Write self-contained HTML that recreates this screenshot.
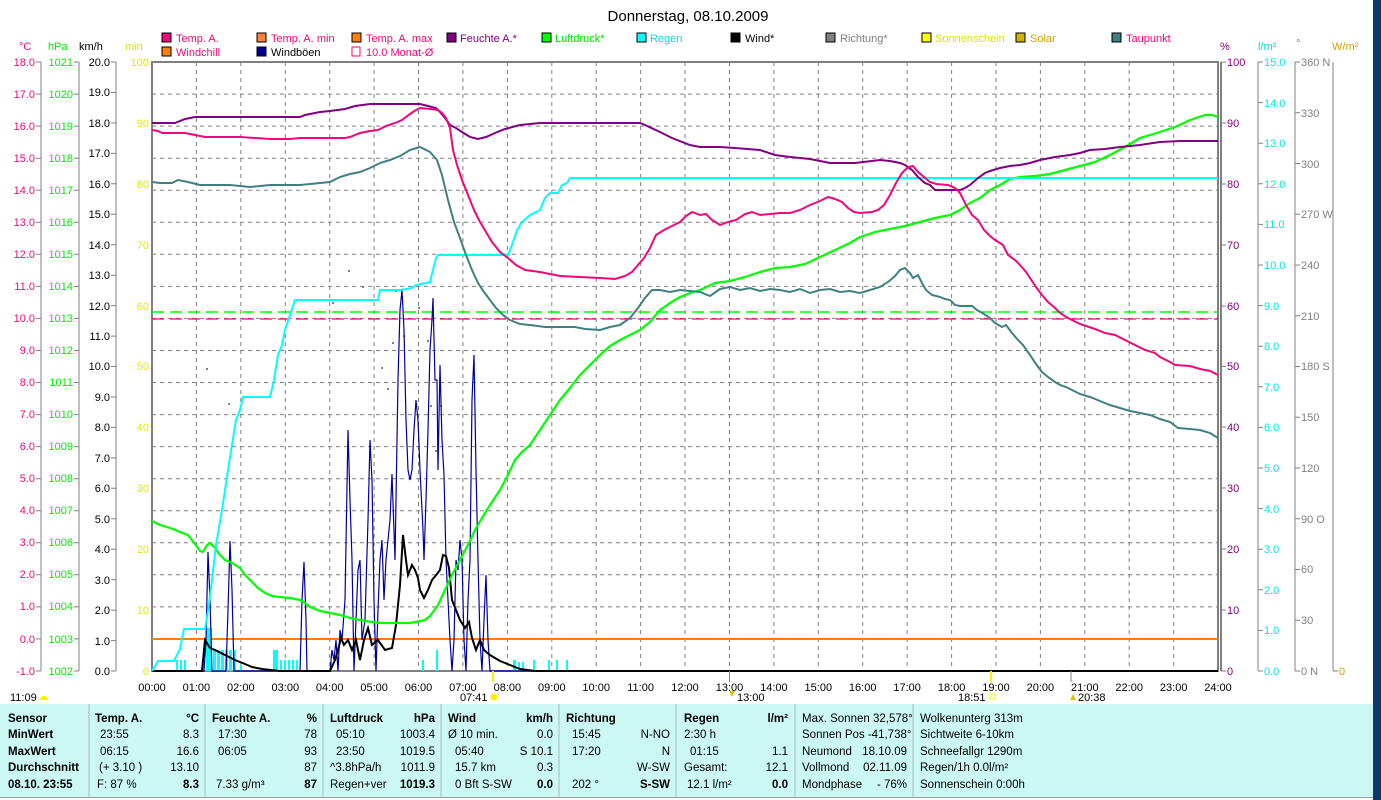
<!DOCTYPE html>
<html><head><meta charset="utf-8"><style>
html,body{margin:0;padding:0;background:#fff;width:1381px;height:800px;overflow:hidden}
svg{display:block;font-family:"Liberation Sans",sans-serif}
</style></head><body>
<svg width="1381" height="800" viewBox="0 0 1381 800" xmlns="http://www.w3.org/2000/svg">
<rect width="1381" height="800" fill="#fff"/>
<rect x="1373" y="0" width="8" height="800" fill="#0a3a6e"/>
<text x="688" y="21" font-size="15" text-anchor="middle" fill="#000">Donnerstag, 08.10.2009</text>

<!-- legend -->
<g font-size="11">
<rect x="162" y="33" width="9" height="9" fill="#f0087a" stroke="#000"/><text x="176" y="42" fill="#f0087a">Temp. A.</text>
<rect x="257" y="33" width="9" height="9" fill="#ff8040" stroke="#000"/><text x="271" y="42" fill="#f0087a">Temp. A. min</text>
<rect x="352" y="33" width="9" height="9" fill="#ff8000" stroke="#000"/><text x="366" y="42" fill="#f0087a">Temp. A. max</text>
<rect x="447" y="33" width="9" height="9" fill="#800080" stroke="#000"/><text x="460" y="42" fill="#800080">Feuchte A.*</text>
<rect x="542" y="33" width="9" height="9" fill="#00ff00" stroke="#000"/><text x="555" y="42" fill="#00dd00">Luftdruck*</text>
<rect x="637" y="33" width="9" height="9" fill="#00ffff" stroke="#000"/><text x="650" y="42" fill="#00e0e0">Regen</text>
<rect x="731" y="33" width="9" height="9" fill="#000" stroke="#000"/><text x="745" y="42" fill="#000">Wind*</text>
<rect x="826" y="33" width="9" height="9" fill="#808080" stroke="#000"/><text x="840" y="42" fill="#808080">Richtung*</text>
<rect x="922" y="33" width="9" height="9" fill="#ffff00" stroke="#000"/><text x="935" y="42" fill="#e0e000">Sonnenschein</text>
<rect x="1016" y="33" width="9" height="9" fill="#d0b000" stroke="#000"/><text x="1030" y="42" fill="#d0a000">Solar</text>
<rect x="1112" y="33" width="9" height="9" fill="#408080" stroke="#000"/><text x="1126" y="42" fill="#f0087a">Taupunkt</text>
<rect x="162" y="47" width="9" height="9" fill="#ff8000" stroke="#000"/><text x="176" y="56" fill="#f0087a">Windchill</text>
<rect x="257" y="47" width="9" height="9" fill="#000090" stroke="#000"/><text x="271" y="56" fill="#000">Windböen</text>
<rect x="352" y="47" width="8" height="9" fill="none" stroke="#f0087a"/><text x="366" y="56" fill="#f0087a">10.0 Monat-Ø</text>
</g>

<!-- axis headers -->
<g font-size="11">
<text x="19" y="50" fill="#f0087a">°C</text>
<text x="48" y="50" fill="#00ee00">hPa</text>
<text x="79" y="50" fill="#000">km/h</text>
<text x="125" y="50" fill="#e0e000">min</text>
<text x="1220" y="50" fill="#800080">%</text>
<text x="1258" y="50" fill="#00e0e0">l/m²</text>
<text x="1296" y="47" fill="#808080">°</text>
<text x="1332" y="50" fill="#d0a000">W/m²</text>
</g>

<!-- grid -->
<g stroke="#808080" stroke-width="1" stroke-dasharray="4,4" fill="none">
<path d="M196.4 62V671M240.8 62V671M285.3 62V671M329.7 62V671M374.1 62V671M418.5 62V671M462.9 62V671M507.4 62V671M551.8 62V671M596.2 62V671M640.6 62V671M685 62V671M729.5 62V671M773.9 62V671M818.3 62V671M862.7 62V671M907.1 62V671M951.6 62V671M996 62V671M1040.4 62V671M1084.8 62V671M1129.2 62V671M1173.7 62V671"/>
<path d="M152 94.1H1218M152 126.1H1218M152 158.2H1218M152 190.2H1218M152 222.3H1218M152 254.3H1218M152 286.4H1218M152 318.4H1218M152 350.5H1218M152 382.5H1218M152 414.6H1218M152 446.6H1218M152 478.7H1218M152 510.7H1218M152 542.8H1218M152 574.8H1218M152 606.9H1218M152 638.9H1218"/>
</g>
<rect x="152" y="62" width="1066" height="609" fill="none" stroke="#808080" stroke-width="2"/>
<line x1="1221" y1="62" x2="1221" y2="671" stroke="#808080" stroke-width="2"/>

<!-- left axes -->
<g stroke="#808080" stroke-width="1">
<line x1="41" y1="62" x2="41" y2="671"/><line x1="79" y1="62" x2="79" y2="671"/><line x1="116" y1="62" x2="116" y2="671"/>
<line x1="1258" y1="62" x2="1258" y2="671"/><line x1="1295" y1="62" x2="1295" y2="671"/><line x1="1333" y1="62" x2="1333" y2="671"/>
<path d="M36 62H41M36 94.1H41M36 126.1H41M36 158.2H41M36 190.2H41M36 222.3H41M36 254.3H41M36 286.4H41M36 318.4H41M36 350.5H41M36 382.5H41M36 414.6H41M36 446.6H41M36 478.7H41M36 510.7H41M36 542.8H41M36 574.8H41M36 606.9H41M36 638.9H41M36 671H41"/>
<path d="M74 62H79M74 94.1H79M74 126.1H79M74 158.2H79M74 190.2H79M74 222.3H79M74 254.3H79M74 286.4H79M74 318.4H79M74 350.5H79M74 382.5H79M74 414.6H79M74 446.6H79M74 478.7H79M74 510.7H79M74 542.8H79M74 574.8H79M74 606.9H79M74 638.9H79M74 671H79"/>
<path d="M111 62H116M111 92.5H116M111 122.9H116M111 153.4H116M111 183.8H116M111 214.3H116M111 244.7H116M111 275.2H116M111 305.6H116M111 336.1H116M111 366.5H116M111 397H116M111 427.4H116M111 457.9H116M111 488.3H116M111 518.8H116M111 549.2H116M111 579.7H116M111 610.1H116M111 640.6H116M111 671H116"/>
<path d="M1221 62H1226M1221 123H1226M1221 184H1226M1221 245H1226M1221 306H1226M1221 366.5H1226M1221 427H1226M1221 488H1226M1221 549H1226M1221 610H1226M1221 671H1226"/>
<path d="M1258 62H1263M1258 102.6H1263M1258 143.2H1263M1258 183.8H1263M1258 224.4H1263M1258 265H1263M1258 305.6H1263M1258 346.2H1263M1258 386.8H1263M1258 427.4H1263M1258 468H1263M1258 508.6H1263M1258 549.2H1263M1258 589.8H1263M1258 630.4H1263M1258 671H1263"/>
<path d="M1295 62H1300M1295 112.8H1300M1295 163.5H1300M1295 214.3H1300M1295 265H1300M1295 315.8H1300M1295 366.5H1300M1295 417.3H1300M1295 468H1300M1295 518.8H1300M1295 569.5H1300M1295 620.3H1300M1295 671H1300"/>
<path d="M1333 671H1338"/>
</g>
<g font-size="11" text-anchor="end">
<g fill="#f0087a">
<text x="35" y="66">18.0</text><text x="35" y="98">17.0</text><text x="35" y="130">16.0</text><text x="35" y="162">15.0</text><text x="35" y="194">14.0</text><text x="35" y="226">13.0</text><text x="35" y="258">12.0</text><text x="35" y="290">11.0</text><text x="35" y="322">10.0</text><text x="35" y="354">9.0</text><text x="35" y="386">8.0</text><text x="35" y="418">7.0</text><text x="35" y="450">6.0</text><text x="35" y="482">5.0</text><text x="35" y="514">4.0</text><text x="35" y="546">3.0</text><text x="35" y="578">2.0</text><text x="35" y="610">1.0</text><text x="35" y="643">0.0</text><text x="35" y="675">-1.0</text>
</g>
<g fill="#00ee00">
<text x="73" y="66">1021</text><text x="73" y="98">1020</text><text x="73" y="130">1019</text><text x="73" y="162">1018</text><text x="73" y="194">1017</text><text x="73" y="226">1016</text><text x="73" y="258">1015</text><text x="73" y="290">1014</text><text x="73" y="322">1013</text><text x="73" y="354">1012</text><text x="73" y="386">1011</text><text x="73" y="418">1010</text><text x="73" y="450">1009</text><text x="73" y="482">1008</text><text x="73" y="514">1007</text><text x="73" y="546">1006</text><text x="73" y="578">1005</text><text x="73" y="610">1004</text><text x="73" y="643">1003</text><text x="73" y="675">1002</text>
</g>
<g fill="#000">
<text x="110" y="66">20.0</text><text x="110" y="96">19.0</text><text x="110" y="127">18.0</text><text x="110" y="157">17.0</text><text x="110" y="188">16.0</text><text x="110" y="218">15.0</text><text x="110" y="249">14.0</text><text x="110" y="279">13.0</text><text x="110" y="310">12.0</text><text x="110" y="340">11.0</text><text x="110" y="370">10.0</text><text x="110" y="401">9.0</text><text x="110" y="431">8.0</text><text x="110" y="462">7.0</text><text x="110" y="492">6.0</text><text x="110" y="523">5.0</text><text x="110" y="553">4.0</text><text x="110" y="584">3.0</text><text x="110" y="614">2.0</text><text x="110" y="645">1.0</text><text x="110" y="675">0.0</text>
</g>
<g fill="#e8e800">
<text x="149" y="66">100</text><text x="149" y="127">90</text><text x="149" y="188">80</text><text x="149" y="249">70</text><text x="149" y="310">60</text><text x="149" y="370">50</text><text x="149" y="431">40</text><text x="149" y="492">30</text><text x="149" y="553">20</text><text x="149" y="614">10</text><text x="149" y="675">0</text>
</g>
</g>
<g font-size="11">
<g fill="#800080">
<text x="1227" y="66">100</text><text x="1227" y="127">90</text><text x="1227" y="188">80</text><text x="1227" y="249">70</text><text x="1227" y="310">60</text><text x="1227" y="370">50</text><text x="1227" y="431">40</text><text x="1227" y="492">30</text><text x="1227" y="553">20</text><text x="1227" y="614">10</text><text x="1227" y="675">0</text>
</g>
<g fill="#00e8e8">
<text x="1264" y="66">15.0</text><text x="1264" y="107">14.0</text><text x="1264" y="147">13.0</text><text x="1264" y="188">12.0</text><text x="1264" y="228">11.0</text><text x="1264" y="269">10.0</text><text x="1264" y="310">9.0</text><text x="1264" y="350">8.0</text><text x="1264" y="391">7.0</text><text x="1264" y="431">6.0</text><text x="1264" y="472">5.0</text><text x="1264" y="513">4.0</text><text x="1264" y="553">3.0</text><text x="1264" y="594">2.0</text><text x="1264" y="634">1.0</text><text x="1264" y="675">0.0</text>
</g>
<g fill="#808080">
<text x="1301" y="66">360 N</text><text x="1301" y="117">330</text><text x="1301" y="168">300</text><text x="1301" y="218">270 W</text><text x="1301" y="269">240</text><text x="1301" y="320">210</text><text x="1301" y="370">180 S</text><text x="1301" y="421">150</text><text x="1301" y="472">120</text><text x="1301" y="523">90  O</text><text x="1301" y="573">60</text><text x="1301" y="624">30</text><text x="1301" y="675">0  N</text>
</g>
<text x="1339" y="675" fill="#d0a000">0</text>
</g>

<!-- dashed month avg lines -->
<line x1="152" y1="312" x2="1218" y2="312" stroke="#00ff00" stroke-width="1.5" stroke-dasharray="12,6"/>
<line x1="152" y1="319" x2="1218" y2="319" stroke="#e0106a" stroke-width="1.2" stroke-dasharray="12,6"/>
<line x1="152" y1="639" x2="1218" y2="639" stroke="#ff8000" stroke-width="2"/>

<!-- rain bars -->
<g fill="#00ffff">
<rect x="176" y="660" width="2" height="11"/><rect x="180" y="660" width="2" height="11"/><rect x="184" y="660" width="2" height="11"/>
<rect x="206" y="628" width="6" height="43"/><rect x="213" y="650" width="3" height="21"/><rect x="217" y="650" width="3" height="21"/><rect x="221" y="650" width="3" height="21"/><rect x="225" y="650" width="3" height="21"/><rect x="229" y="650" width="3" height="21"/><rect x="233" y="650" width="3" height="21"/>
<rect x="240" y="665" width="2" height="6"/>
<rect x="273" y="650" width="5" height="21"/><rect x="280" y="660" width="2" height="11"/><rect x="284" y="660" width="2" height="11"/><rect x="288" y="660" width="2" height="11"/><rect x="292" y="660" width="2" height="11"/><rect x="296" y="660" width="2" height="11"/>
<rect x="330" y="662" width="2" height="9"/><rect x="422" y="660" width="2" height="11"/><rect x="436" y="650" width="2" height="21"/>
<rect x="513" y="660" width="3" height="11"/><rect x="518" y="662" width="2" height="9"/><rect x="522" y="662" width="2" height="9"/><rect x="533" y="660" width="2" height="11"/><rect x="548" y="660" width="2" height="11"/><rect x="556" y="660" width="2" height="11"/><rect x="566" y="660" width="2" height="11"/>
</g>

<!-- gray direction dots -->
<g fill="#808080">
<rect x="206" y="368" width="2" height="2"/><rect x="228" y="403" width="2" height="2"/><rect x="332" y="302" width="2" height="2"/><rect x="348" y="270" width="2" height="2"/><rect x="362" y="286" width="2" height="2"/><rect x="381" y="367" width="2" height="2"/><rect x="392" y="342" width="2" height="2"/><rect x="395" y="290" width="2" height="2"/><rect x="403" y="335" width="2" height="2"/><rect x="418" y="307" width="2" height="2"/><rect x="427" y="340" width="2" height="2"/><rect x="430" y="405" width="2" height="2"/><rect x="440" y="405" width="2" height="2"/><rect x="435" y="450" width="2" height="2"/><rect x="448" y="318" width="2" height="2"/><rect x="387" y="388" width="2" height="2"/>
</g>

<!-- wind gusts -->
<polyline fill="none" stroke="#0000a0" stroke-width="1.2" points="152,671 204,671 206,640 208,552 210,600 212,671 226,671 228,610 230,541 232,590 234,671 300,671 302,600 304,562 306,620 307,671 330,671 332,650 334,660 336,640 338,671 340,630 342,640 345,600 348,430 350,500 352,560 354,671 356,620 358,570 360,560 362,640 365,620 368,520 370,440 372,480 374,600 376,671 378,610 380,560 382,540 384,600 386,560 390,520 392,474 395,560 398,380 400,310 402,290 404,330 406,420 408,470 410,480 412,470 414,430 416,400 418,420 420,470 423,530 424,560 426,500 428,430 430,350 432,320 433,298 435,380 437,380 438,470 440,365 442,440 444,475 446,560 448,600 450,640 452,671 454,640 456,560 458,570 460,540 462,560 464,640 466,671 468,600 470,560 472,400 474,355 476,470 478,560 480,640 482,671 484,620 486,575 488,640 490,671 1218,671"/>
<!-- wind average -->
<polyline fill="none" stroke="#000" stroke-width="2" points="152,671 202,671 205,640 210,648 215,650 225,655 235,660 245,664 252,667 262,669 280,671 330,671 335,660 338,650 341,638 344,645 348,640 352,650 356,640 360,660 364,640 368,628 372,645 378,640 385,650 392,648 396,625 400,585 403,535 406,560 408,575 412,565 415,570 418,578 420,590 424,598 428,590 432,580 437,574 440,570 443,555 446,556 449,568 452,600 456,610 460,620 465,628 469,622 472,638 476,650 480,640 484,650 490,655 500,661 510,665 520,669 535,671 1218,671"/>

<!-- pressure -->
<polyline fill="none" stroke="#00ff00" stroke-width="2.2" stroke-linejoin="round" points="152,521 160,525 170,528 180,532 188,535 195,544 200,551 203,552 207,545 210,543 215,548 220,555 225,560 232,563 240,568 245,575 250,580 258,588 265,593 272,596 280,597 290,598 300,600 305,603 310,607 320,611 330,613 340,615 350,618 365,621 380,623 410,623 425,620 430,616 438,605 445,590 452,575 460,560 468,545 475,530 482,518 490,505 500,490 508,475 515,460 522,452 530,445 540,430 550,415 560,400 570,388 580,375 590,365 600,355 610,346 620,340 630,335 640,330 650,322 660,310 670,303 680,297 690,293 700,290 715,283 730,281 745,277 760,272 775,268 790,267 805,264 820,257 835,250 850,243 860,237 875,232 890,229 905,226 920,222 935,218 950,215 960,210 970,203 980,198 990,190 1000,185 1010,179 1020,177 1035,176 1050,174 1065,170 1080,166 1095,162 1110,155 1125,147 1140,138 1160,132 1175,127 1190,120 1205,115 1212,115 1218,117"/>

<!-- rain line -->
<polyline fill="none" stroke="#00ffff" stroke-width="2" points="152,671 158,661 174,661 180,649 184,629 205,629 208,611 212,580 216,545 222,510 228,470 232,445 236,420 240,410 243,397 270,397 274,380 278,355 282,345 285,330 290,315 295,300 378,300 380,290 400,290 412,288 416,285 430,282 433,270 436,258 438,255 508,255 512,245 517,230 522,222 530,215 540,210 545,198 550,193 558,193 562,185 567,183 570,178 1218,178"/>

<!-- dew point -->
<polyline fill="none" stroke="#408080" stroke-width="2" points="152,182 160,183 172,183 178,180 188,182 200,185 230,185 250,187 270,185 300,185 330,182 340,177 350,174 360,172 370,168 380,163 390,160 400,156 410,150 420,147 430,152 437,160 442,175 448,200 454,222 460,238 466,255 472,270 478,283 484,292 490,300 496,308 503,315 510,320 520,324 530,325 545,327 560,327 575,327 585,329 600,330 610,327 620,325 630,318 638,308 645,298 652,290 660,290 670,292 680,290 690,291 700,292 710,296 720,289 730,287 740,290 750,288 760,291 770,289 780,290 790,292 800,289 810,293 820,290 830,289 840,292 850,291 860,293 870,290 880,287 888,282 895,276 900,270 905,268 910,273 913,278 918,275 922,283 926,290 932,295 940,297 945,299 950,300 955,305 960,306 965,306 972,306 977,310 984,314 990,318 995,323 1002,327 1006,325 1012,333 1018,340 1023,345 1030,355 1036,364 1042,372 1048,377 1055,382 1060,385 1066,387 1072,390 1080,394 1090,397 1100,401 1110,405 1120,408 1130,411 1140,413 1150,415 1160,419 1170,422 1178,428 1190,429 1200,430 1210,433 1218,438"/>

<!-- humidity -->
<polyline fill="none" stroke="#800080" stroke-width="2" points="152,123 175,123 185,119 195,117 210,117 230,117 300,117 305,115 320,112 330,111 345,109 355,106 370,104 420,104 428,106 436,108 440,112 445,118 450,125 456,128 462,132 470,137 478,139 486,137 495,133 505,129 520,125 540,123 640,123 645,125 660,132 672,138 690,145 700,147 720,147 735,148 760,150 775,155 790,157 810,159 830,163 855,163 880,160 890,161 900,163 905,165 912,170 918,177 925,183 930,185 935,190 950,190 960,190 965,188 970,185 978,178 985,173 990,171 1000,168 1010,166 1020,165 1030,163 1040,160 1055,157 1070,155 1080,153 1090,150 1105,149 1120,147 1140,145 1160,142 1180,141 1218,141"/>

<!-- temperature -->
<polyline fill="none" stroke="#f0087a" stroke-width="2" points="152,130 158,131 162,133 175,133 185,133 195,135 205,137 240,137 270,139 290,139 300,138 345,138 350,137 360,133 370,131 378,130 386,126 395,123 402,120 410,114 416,110 420,108 430,109 438,110 442,113 446,118 450,128 453,150 457,165 462,180 468,195 474,210 480,222 486,232 492,242 500,252 508,258 516,265 525,270 540,272 560,276 580,277 600,278 615,279 625,276 632,272 638,265 644,258 650,248 656,235 664,230 672,226 680,222 686,216 692,212 700,215 706,214 712,220 720,225 728,222 736,220 745,214 752,212 760,215 770,214 780,213 790,213 800,210 810,205 820,201 828,197 835,199 842,202 848,208 854,212 860,213 872,212 878,210 884,205 890,195 896,183 902,173 908,167 913,166 918,172 924,177 930,182 936,184 948,185 955,188 960,193 966,205 972,215 978,220 984,230 990,236 995,240 1003,245 1008,255 1015,260 1020,265 1026,272 1030,278 1036,287 1042,295 1048,302 1054,307 1060,313 1068,318 1080,324 1095,329 1105,333 1115,335 1125,340 1135,345 1145,350 1155,353 1160,357 1170,362 1175,365 1190,366 1200,369 1210,371 1218,375"/>

<!-- time axis -->
<g stroke="#808080"><line x1="729.5" y1="671" x2="729.5" y2="682"/><line x1="1071" y1="671" x2="1071" y2="682"/></g>
<line x1="493" y1="671" x2="493" y2="682" stroke="#ffee00" stroke-width="2"/>
<line x1="991" y1="671" x2="991" y2="682" stroke="#ffee00" stroke-width="2"/>
<g font-size="11" text-anchor="middle" fill="#000">
<text x="152" y="691">00:00</text><text x="196.4" y="691">01:00</text><text x="240.8" y="691">02:00</text><text x="285.3" y="691">03:00</text><text x="329.7" y="691">04:00</text><text x="374.1" y="691">05:00</text><text x="418.5" y="691">06:00</text><text x="462.9" y="691">07:00</text><text x="507.4" y="691">08:00</text><text x="551.8" y="691">09:00</text><text x="596.2" y="691">10:00</text><text x="640.6" y="691">11:00</text><text x="685" y="691">12:00</text><text x="729.5" y="691">13:00</text><text x="773.9" y="691">14:00</text><text x="818.3" y="691">15:00</text><text x="862.7" y="691">16:00</text><text x="907.1" y="691">17:00</text><text x="951.6" y="691">18:00</text><text x="996" y="691">19:00</text><text x="1040.4" y="691">20:00</text><text x="1084.8" y="691">21:00</text><text x="1129.2" y="691">22:00</text><text x="1173.7" y="691">23:00</text><text x="1218" y="691">24:00</text>
</g>
<g font-size="11" fill="#000">
<text x="10" y="701">11:09</text><path d="M40 700a4 4 0 0 1 8 0z" fill="#ffee00"/>
<text x="460" y="701">07:41</text><circle cx="494" cy="697" r="3.5" fill="#ffee00"/>
<text x="737" y="701">13:00</text><path d="M729 691l3 6 3-6z" fill="#e0c000"/>
<text x="958" y="701">18:51</text><rect x="990" y="694" width="5" height="5" fill="none" stroke="#ffee00"/>
<text x="1078" y="701">20:38</text><path d="M1070 700l3-6 3 6z" fill="#e0c000"/>
</g>

<!-- table -->
<rect x="0" y="704" width="1373" height="93" fill="#ccf8f4"/>
<line x1="0" y1="797.5" x2="1373" y2="797.5" stroke="#a0a0a0"/>
<g stroke="#a8b8b8" stroke-width="1"><path d="M89 704V797M205 704V797M323 704V797M441 704V797M559 704V797M676 704V797M795 704V797M913 704V797"/></g>
<g font-size="11.5" fill="#000">
<g font-weight="bold"><text x="8" y="722">Sensor</text><text x="8" y="738">MinWert</text><text x="8" y="755">MaxWert</text><text x="8" y="771">Durchschnitt</text><text x="8" y="788">08.10. 23:55</text>
<text x="95" y="722">Temp. A.</text><text x="212" y="722">Feuchte A.</text><text x="330" y="722">Luftdruck</text><text x="448" y="722">Wind</text><text x="566" y="722">Richtung</text><text x="684" y="722">Regen</text></g>
<g text-anchor="end" font-weight="bold"><text x="199" y="722">°C</text><text x="317" y="722">%</text><text x="435" y="722">hPa</text><text x="553" y="722">km/h</text><text x="788" y="722">l/m²</text>
<text x="199" y="788">8.3</text><text x="317" y="788">87</text><text x="435" y="788">1019.3</text><text x="553" y="788">0.0</text><text x="670" y="788">S-SW</text><text x="788" y="788">0.0</text></g>
<text x="100" y="738">23:55</text><text x="100" y="755">06:15</text><text x="99" y="771">(+ 3.10 )</text><text x="97" y="788">F: 87 %</text>
<text x="218" y="738">17:30</text><text x="218" y="755">06:05</text><text x="216" y="788">7.33 g/m³</text>
<text x="336" y="738">05:10</text><text x="336" y="755">23:50</text><text x="330" y="771">^3.8hPa/h</text><text x="330" y="788">Regen+ver</text>
<text x="448" y="738">Ø 10 min.</text><text x="455" y="755">05:40</text><text x="455" y="771">15.7 km</text><text x="455" y="788">0 Bft S-SW</text>
<text x="572" y="738">15:45</text><text x="572" y="755">17:20</text><text x="572" y="788">202 °</text>
<text x="684" y="738">2:30 h</text><text x="690" y="755">01:15</text><text x="684" y="771">Gesamt:</text><text x="687" y="788">12.1 l/m²</text>
<g text-anchor="end"><text x="199" y="738">8.3</text><text x="199" y="755">16.6</text><text x="199" y="771">13.10</text>
<text x="317" y="738">78</text><text x="317" y="755">93</text><text x="317" y="771">87</text>
<text x="435" y="738">1003.4</text><text x="435" y="755">1019.5</text><text x="435" y="771">1011.9</text>
<text x="553" y="738">0.0</text><text x="553" y="755">S 10.1</text><text x="553" y="771">0.3</text>
<text x="670" y="738">N-NO</text><text x="670" y="755">N</text><text x="670" y="771">W-SW</text>
<text x="788" y="755">1.1</text><text x="788" y="771">12.1</text></g>
<text x="802" y="722">Max. Sonnen 32,578°</text><text x="802" y="738">Sonnen Pos  -41,738°</text><text x="802" y="755">Neumond</text><text x="802" y="771">Vollmond</text><text x="802" y="788">Mondphase</text>
<g text-anchor="end"><text x="907" y="755">18.10.09</text><text x="907" y="771">02.11.09</text><text x="907" y="788">- 76%</text></g>
<text x="920" y="722">Wolkenunterg   313m</text><text x="920" y="738">Sichtweite      6-10km</text><text x="920" y="755">Schneefallgr   1290m</text><text x="920" y="771">Regen/1h       0.0l/m²</text><text x="920" y="788">Sonnenschein  0:00h</text>
</g>
</svg>
</body></html>
